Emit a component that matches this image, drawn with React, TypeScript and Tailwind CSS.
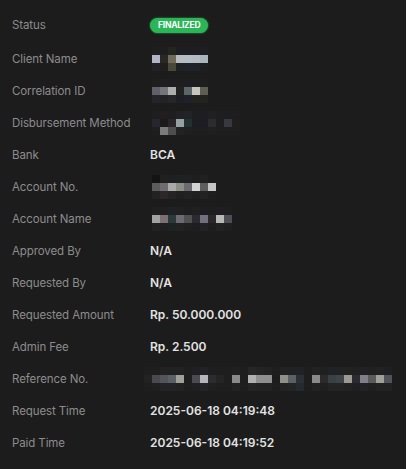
import React from 'react'

const D = '#1e1e1e'

const mosaics: Record<string, string[][]> = {
  client: [
    ['#1e1e20', D, '#242420', '#1e1e22', '#1e1e22', '#1e1e22', '#1e1e22'],
    ['#b4b4c8', '#2a2826', '#6e6c58', '#b8bcc0', '#b6bcc4', '#b4bac2', '#aab4bc'],
    ['#202228', '#221e1e', '#4a4838', '#1e2224', '#20222a', '#20222a', '#1e1e22'],
  ],
  correlation: [
    ['#1e1e1e', '#201e1e', '#1e1e22', D, '#1e1e22', D, D],
    ['#60606a', '#74747c', '#aeaeae', '#222220', '#5c6668', '#c6c6be', '#5e5e52'],
    ['#24242a', '#222222', '#262628', '#1e1e26', '#20202a', '#22221e', '#22221e'],
  ],
  method: [
    [D, '#201e1e', '#1e1e20', '#222224', '#202424', D, '#1e1e22', '#202020', D, '#1e1e20', D],
    ['#26262e', '#1c1a1a', '#2a2628', '#96a0a0', '#223030', '#1c1c24', '#1c1c22', '#2c2c2e', '#1e1e1e', '#383840', '#221e1e'],
    [D, '#7c7c7c', '#4e4e4e', '#222222', '#202020', D, D, '#202020', D, '#1e1e1e', D],
  ],
  accountNo: [
    ['#141414', '#202020', '#1c2020', '#1e2222', '#202020', D, '#202020', '#1c1c1c'],
    ['#5c5c5e', '#6e6c70', '#aaaaaa', '#8e8e88', '#6c6c70', '#d4d4d4', '#5e5e60', '#c4c6c8'],
    ['#222222', '#2c2828', '#242424', '#202020', '#222222', '#202020', '#222222', D],
  ],
  accountName: [
    ['#1e2020', '#201e1e', '#1e2222', '#202020', '#1e1e20', '#202020', '#1e1e22', D, '#201e22', '#1e1e20'],
    ['#a2a2a2', '#7c7074', '#2a3a3a', '#6c6a72', '#505050', '#2a2a32', '#72707e', '#2a2828', '#b8b8b6', '#4e4e56'],
    ['#222222', '#202020', '#1e2222', '#222222', '#202020', '#1e1e20', '#222224', D, '#222222', '#202020'],
  ],
  reference: [
    [D, D, '#222224', '#202224', '#222222', D, '#202022', '#222226', '#1e1e20', D, D, '#202020', D, '#262626', '#242426', '#222222', D, '#222222', '#202224', '#202226', D, '#222222', '#202020', '#202224', '#202224', '#222222', '#202022', '#222224', '#202020', '#222222', '#202022'],
    ['#222222', '#4a4a4e', '#52565a', '#5a6064', '#a0a09a', '#1e1e1e', '#4a4a50', '#b8b4bc', '#2a2c30', '#242424', '#1e1e1e', '#8a8a88', '#1e1e1e', '#b0b0b0', '#909090', '#8e9090', '#1c1c1c', '#909088', '#5a6064', '#2a3036', '#1e1e1e', '#8a8a8a', '#2a2a2a', '#3a4044', '#3e4448', '#9a9a90', '#2a2a30', '#808088', '#5a5a5a', '#a0a09a', '#50545a'],
    [D, '#202020', '#242426', '#222426', '#222222', D, '#202022', '#242424', '#1e2022', D, D, '#222222', D, '#242424', '#222222', '#222222', D, '#222222', '#222426', '#242a2e', D, '#222222', '#202020', '#222426', '#222426', '#222222', '#202022', '#222224', '#202020', '#222222', '#222224'],
  ],
}

// blurred-out values, drawn as a mosaic
function Pixelated({ rows, shift = 0 }: { rows: string[][]; shift?: number }) {
  return (
    <div className="flex flex-col" style={{ marginLeft: shift }}>
      {rows.map((row, i) => (
        <div key={i} className="flex">
          {row.map((c, j) => (
            <div key={j} className="w-2 h-2" style={{ backgroundColor: c }} />
          ))}
        </div>
      ))}
    </div>
  )
}

const rows: { label: string; value?: string; mosaic?: string; shift?: number }[] = [
  { label: 'Client Name', mosaic: 'client', shift: 2 },
  { label: 'Correlation ID', mosaic: 'correlation', shift: 2 },
  { label: 'Disbursement Method', mosaic: 'method', shift: 2 },
  { label: 'Bank', value: 'BCA' },
  { label: 'Account No.', mosaic: 'accountNo', shift: 2 },
  { label: 'Account Name', mosaic: 'accountName', shift: 2 },
  { label: 'Approved By', value: 'N/A' },
  { label: 'Requested By', value: 'N/A' },
  { label: 'Requested Amount', value: 'Rp. 50.000.000' },
  { label: 'Admin Fee', value: 'Rp. 2.500' },
  { label: 'Reference No.', mosaic: 'reference', shift: -6 },
  { label: 'Request Time', value: '2025-06-18 04:19:48' },
  { label: 'Paid Time', value: '2025-06-18 04:19:52' },
]

export default function App() {
  return (
    <div className="min-h-screen bg-white" style={{ fontFamily: 'Inter, "Noto Sans", sans-serif' }}>
      <div className="w-[406px] h-[469px] bg-[#1c1c1c] pt-2">
        <div className="flex items-center h-[35px]">
          <div className="w-[150px] pl-3 pt-px text-[11.5px] tracking-[-0.1px] text-[#8c8c8c]">Status</div>
          <span className="rounded-full bg-[#2ab557] px-[8px] py-[2px] text-[8.5px] font-bold leading-[11px] text-white tracking-tight shadow-[0_0_2px_#2ab557]">
            FINALIZED
          </span>
        </div>
        {rows.map((r) => (
          <div key={r.label} className="flex items-center h-8">
            <div className="w-[150px] pl-3 pt-px text-[11.5px] tracking-[-0.1px] text-[#8c8c8c]">{r.label}</div>
            {r.mosaic ? (
              <Pixelated rows={mosaics[r.mosaic]} shift={r.shift} />
            ) : (
              <div className="text-[12px] font-semibold text-[#e2e2e2]">{r.value}</div>
            )}
          </div>
        ))}
      </div>
    </div>
  )
}
